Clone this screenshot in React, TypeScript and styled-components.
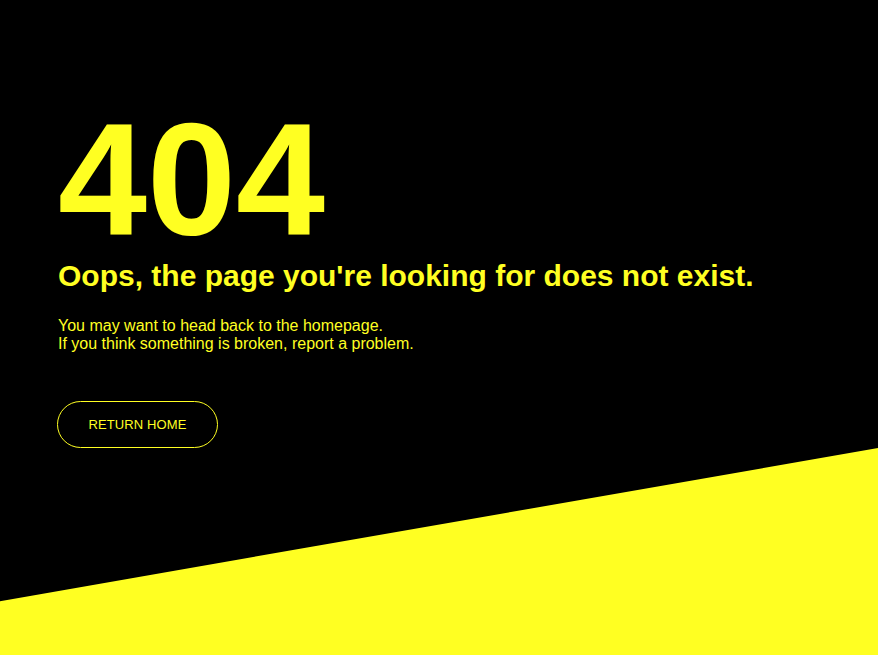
import React from "react";
import styled, { createGlobalStyle } from "styled-components";

const YELLOW = "#ffff22";

const Global = createGlobalStyle`
  html, body {
    margin: 0;
    padding: 0;
    background: #000;
    overflow: hidden;
  }
  body {
    font-family: "Liberation Sans", Arial, sans-serif;
  }
`;

const Page = styled.div`
  height: 100vh;
  display: flex;
  flex-direction: column;
  background: #000;
  color: ${YELLOW};
`;

const Content = styled.main`
  padding: 99px 0 0 58px;
  display: flex;
  flex-direction: column;
  align-items: flex-start;
`;

const Code = styled.h1`
  margin: 0;
  font-size: 160px;
  line-height: 1;
  font-weight: 700;
`;

const Title = styled.h2`
  margin: 0;
  font-size: 30px;
  font-weight: 700;
  line-height: 34px;
`;

const Message = styled.p`
  margin: 24px 0 0;
  font-size: 16px;
  line-height: 18px;
`;

const HomeButton = styled.a`
  margin-top: 48px;
  margin-left: -1px;
  display: inline-flex;
  align-items: center;
  justify-content: center;
  box-sizing: border-box;
  width: 161px;
  height: 47px;
  border: 1px solid ${YELLOW};
  border-radius: 24px;
  color: ${YELLOW};
  font-size: 13px;
  text-decoration: none;
  letter-spacing: 0.1px;
`;

const Stripe = styled.div`
  margin-top: auto;
  flex: 0 0 207px;
  background: ${YELLOW};
  clip-path: polygon(0 74%, 100% 0, 100% 100%, 0 100%);
`;

export default function App() {
  return (
    <>
      <Global />
      <Page>
        <Content>
          <Code>404</Code>
          <Title>Oops, the page you're looking for does not exist.</Title>
          <Message>
            You may want to head back to the homepage.
            <br />
            If you think something is broken, report a problem.
          </Message>
          <HomeButton href="#">RETURN HOME</HomeButton>
        </Content>
        <Stripe />
      </Page>
    </>
  );
}
